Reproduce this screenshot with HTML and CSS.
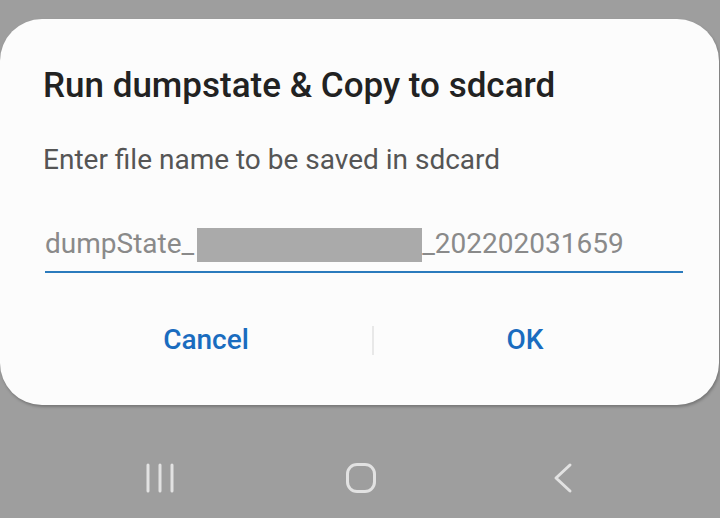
FILE: index.html
```html
<!DOCTYPE html>
<html>
<head>
<meta charset="utf-8">
<link rel="stylesheet" href="styles.css">
</head>
<body>
<div class="screen">
  <div class="dialog">
    <div class="title">Run dumpstate &amp; Copy to sdcard</div>
    <div class="message">Enter file name to be saved in sdcard</div>
    <div class="field">
      <span class="value">dumpState_</span><span class="redact"></span><span class="value">_202202031659</span>
    </div>
    <div class="buttons">
      <div class="btn">Cancel</div>
      <div class="divider"></div>
      <div class="btn">OK</div>
    </div>
  </div>
  <div class="navbar">
    <svg class="nav-icon recent" width="30" height="32" viewBox="0 0 30 32">
      <g stroke="#e2e2e2" stroke-width="3" stroke-linecap="round">
        <line x1="3" y1="3" x2="3" y2="29"/>
        <line x1="15" y1="3" x2="15" y2="29"/>
        <line x1="27" y1="3" x2="27" y2="29"/>
      </g>
    </svg>
    <svg class="nav-icon home" width="32" height="32" viewBox="0 0 32 32">
      <rect x="2.5" y="2.5" width="27" height="27" rx="9.5" ry="9.5" fill="none" stroke="#e2e2e2" stroke-width="3"/>
    </svg>
    <svg class="nav-icon back" width="22" height="32" viewBox="0 0 22 32">
      <polyline points="18,3 4,16 18,29" fill="none" stroke="#e2e2e2" stroke-width="3" stroke-linecap="round" stroke-linejoin="round"/>
    </svg>
  </div>
</div>
</body>
</html>
```
FILE: styles.css
```css
html, body {
  margin: 0;
  padding: 0;
  background: #9e9e9e;
}
.screen {
  width: 720px;
  height: 518px;
  overflow: hidden;
  font-family: Roboto, "Liberation Sans", sans-serif;
}
.dialog {
  margin-top: 19px;
  width: 719px;
  height: 386px;
  box-sizing: border-box;
  padding: 47px 36px 0 43px;
  background: #fcfcfc;
  border-radius: 42px;
  box-shadow: 1px 2px 3px rgba(0,0,0,0.25);
}
.title {
  font-size: 35px;
  font-weight: 500;
  line-height: 40px;
  color: #222222;
}
.message {
  margin-top: 38px;
  font-size: 28px;
  line-height: 32px;
  color: #555555;
}
.field {
  margin: 52px 0 0 2px;
  padding-bottom: 9px;
  border-bottom: 2px solid #2b7bbd;
  font-size: 28px;
  line-height: 32px;
  color: #8a8a8a;
  white-space: nowrap;
  display: flex;
  align-items: flex-start;
}
.redact {
  display: inline-block;
  width: 225px;
  height: 34px;
  margin-left: 3px;
  background: #aaaaaa;
}
.buttons {
  margin: 51px 0 0 -3px;
  display: grid;
  grid-template-columns: 332px 2px 302px;
  align-items: center;
}
.btn {
  text-align: center;
  font-size: 28px;
  font-weight: 500;
  line-height: 32px;
  color: #1a6cbf;
}
.divider {
  width: 2px;
  height: 29px;
  background: #e8e8e8;
}
.navbar {
  display: flex;
  align-items: center;
  height: 113px;
  padding: 32px 0 0 145px;
  box-sizing: border-box;
}
.nav-icon {
  display: block;
  flex: none;
}
.home {
  margin-left: 170px;
}
.back {
  margin-left: 175px;
}
```
